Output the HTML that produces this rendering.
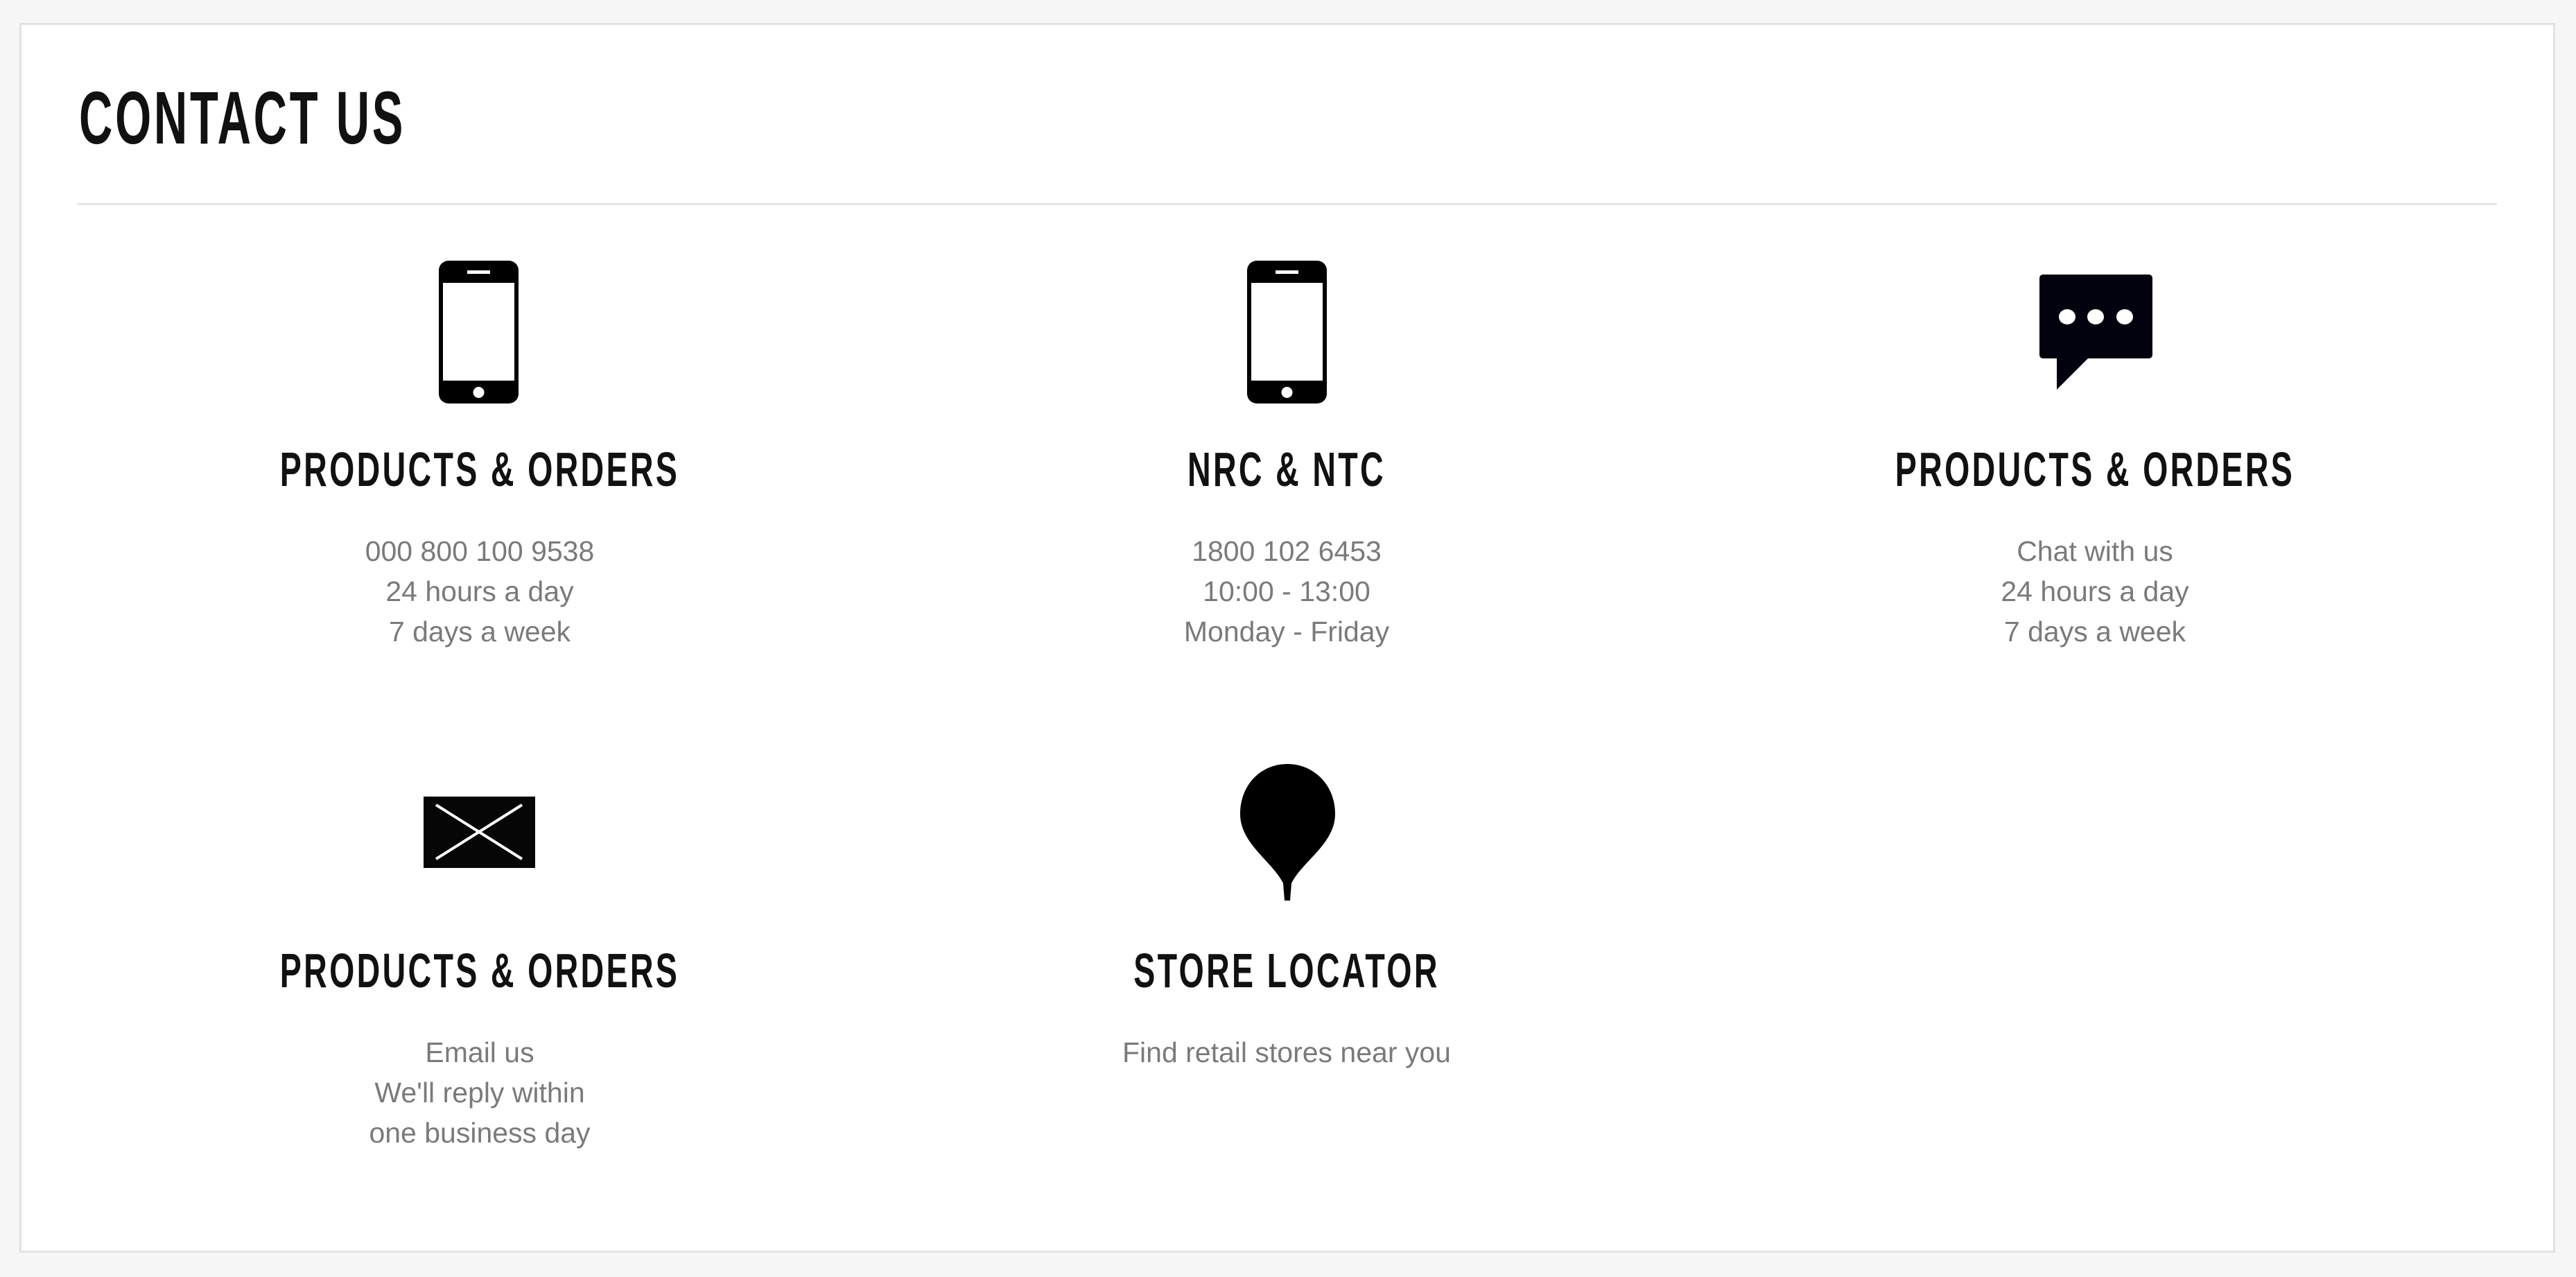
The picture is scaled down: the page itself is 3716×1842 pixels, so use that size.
<!DOCTYPE html>
<html><head><meta charset="utf-8"><style>
html,body{margin:0;padding:0;}
body{width:3716px;height:1842px;background:#f6f6f6;position:relative;overflow:hidden;font-family:"Liberation Sans",Arial,sans-serif;}
.card{position:absolute;left:28px;top:33px;width:3652px;height:1768px;background:#fff;border:3px solid #e2e2e2;}
.t{position:absolute;white-space:nowrap;}
.title{left:114px;top:116px;font-family:"Liberation Sans Narrow","Liberation Sans",sans-serif;font-weight:bold;font-size:108px;line-height:108px;color:#111;letter-spacing:6px;transform:scaleX(0.62);transform-origin:0 0;}
.hr{position:absolute;left:111px;top:293px;width:3491px;height:3px;background:#e6e6e6;}
.col{position:absolute;width:1200px;text-align:center;}
.h{font-family:"Liberation Sans Narrow","Liberation Sans",sans-serif;font-weight:bold;font-size:70px;line-height:70px;color:#111;letter-spacing:5px;white-space:nowrap;transform:scaleX(0.665);transform-origin:50% 0;}
.p{font-size:41px;line-height:58px;color:#7a7a7a;margin-top:54px;}
svg{position:absolute;}
</style></head><body>
<div class="card"></div>
<div class="t title">CONTACT US</div>
<div class="hr"></div>

<svg style="left:633px;top:376px" width="115" height="206" viewBox="0 0 115 206">
<rect x="0" y="0" width="115" height="206" rx="14" fill="#000"/>
<rect x="6" y="32" width="103" height="141" fill="#fff"/>
<rect x="41" y="14" width="33" height="5" fill="#fff"/>
<circle cx="57.5" cy="190" r="8" fill="#fff"/>
</svg>
<svg style="left:1799px;top:376px" width="115" height="206" viewBox="0 0 115 206">
<rect x="0" y="0" width="115" height="206" rx="14" fill="#000"/>
<rect x="6" y="32" width="103" height="141" fill="#fff"/>
<rect x="41" y="14" width="33" height="5" fill="#fff"/>
<circle cx="57.5" cy="190" r="8" fill="#fff"/>
</svg>
<svg style="left:2942px;top:396px" width="163" height="166" viewBox="0 0 163 166">
<rect x="0" y="0" width="163" height="121" rx="5" fill="#02020f"/>
<polygon points="25,118 25,166 73,118" fill="#02020f"/>
<ellipse cx="40" cy="61" rx="12" ry="11" fill="#fff"/>
<ellipse cx="81" cy="61" rx="12" ry="11" fill="#fff"/>
<ellipse cx="123" cy="61" rx="12" ry="11" fill="#fff"/>
</svg>
<svg style="left:611px;top:1149px" width="161" height="103" viewBox="0 0 161 103">
<rect x="0" y="0" width="161" height="103" fill="#060606"/>
<path d="M18 12 L142 90 M142 12 L18 90" stroke="#fff" stroke-width="4" fill="none"/>
</svg>
<svg style="left:1789px;top:1102px" width="137" height="197" viewBox="0 0 137 197">
<path d="M68,0 C106,0 137,30 137,72 C137,115 90,140 74,172 L72,197 L64,197 L62,172 C46,140 0,115 0,72 C0,30 30,0 68,0 Z" fill="#000"/>
</svg>

<div class="col" style="left:92px;top:642px"><div class="h">PRODUCTS &amp; ORDERS</div><div class="p">000 800 100 9538<br>24 hours a day<br>7 days a week</div></div>
<div class="col" style="left:1256px;top:642px"><div class="h">NRC &amp; NTC</div><div class="p">1800 102 6453<br>10:00 - 13:00<br>Monday - Friday</div></div>
<div class="col" style="left:2422px;top:642px"><div class="h">PRODUCTS &amp; ORDERS</div><div class="p">Chat with us<br>24 hours a day<br>7 days a week</div></div>
<div class="col" style="left:92px;top:1365px"><div class="h">PRODUCTS &amp; ORDERS</div><div class="p">Email us<br>We'll reply within<br>one business day</div></div>
<div class="col" style="left:1256px;top:1365px"><div class="h">STORE LOCATOR</div><div class="p">Find retail stores near you</div></div>
</body></html>
